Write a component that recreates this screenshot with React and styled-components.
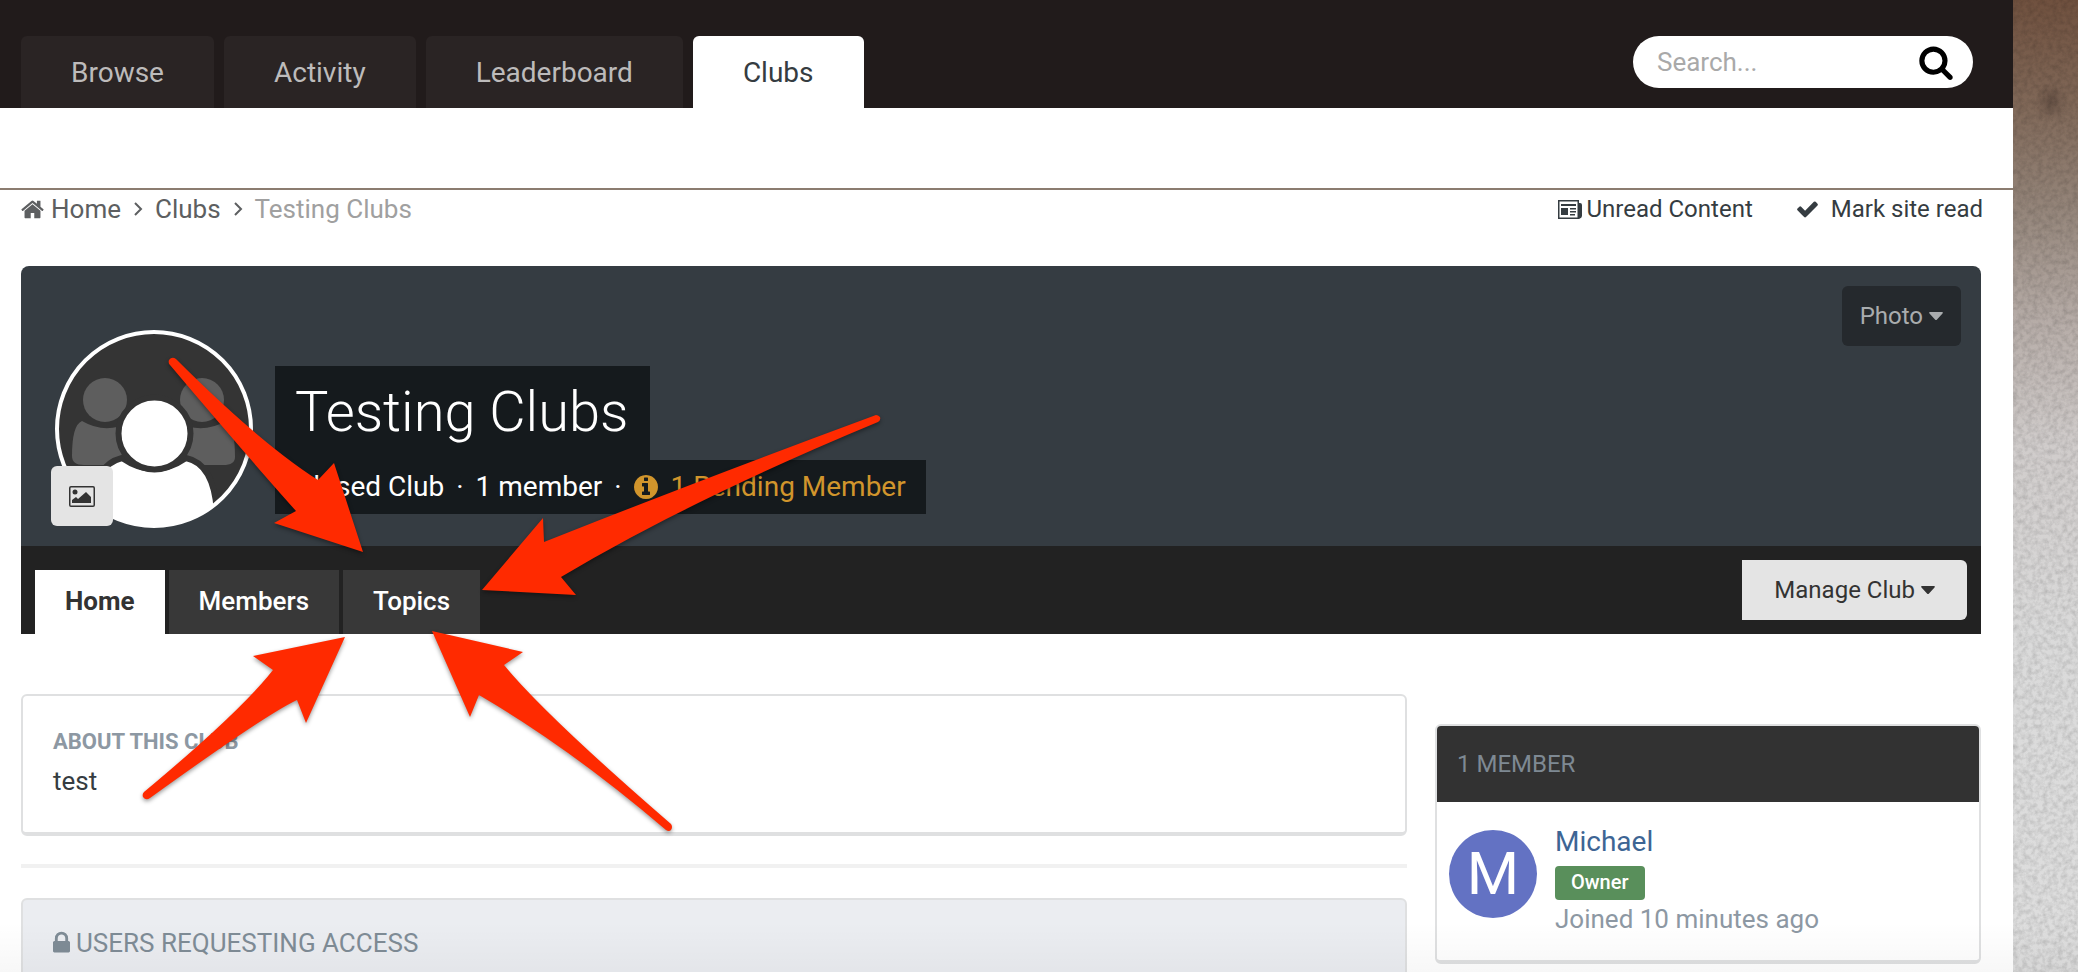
import React from 'react'
import styled, { createGlobalStyle } from 'styled-components'


const GlobalStyle = createGlobalStyle`
    *{
        box-sizing:border-box;
    }
    body{
        margin:0;
        overflow:hidden;
        font-family:Roboto,"Liberation Sans",sans-serif;
        font-size:26px;
        line-height:32px;
        color:#353c41;
    }
    a{
        color:inherit;
        text-decoration:none;
    }
    button,input{
        font-family:inherit;
        font-size:inherit;
        line-height:inherit;
        border:0;
        margin:0;
    }
    h1,h2,h3,p,ol,ul{
        margin:0;
        padding:0;
        font-weight:400;
        font-size:inherit;
        list-style:none;
    }
    svg{
        display:block;
        flex:none;
    }
`;

const Page = styled.div`
    position:relative;
    height:100vh;
    overflow:hidden;
    display:grid;
    grid-template-columns:minmax(0,1fr) 65px;
    background:#fff;
`;

const Wood = styled.svg`
    width:100%;
    height:100%;
`;

const TopBar = styled.header`
    display:flex;
    justify-content:space-between;
    align-items:flex-start;
    height:108px;
    padding:36px 40px 0 21px;
    background:#211b1b;
`;

const MainTabs = styled.nav`
    display:flex;
    gap:10px;
`;

const MainTab = styled.a`
    height:72px;
    padding:0 50px;
    border-radius:6px 6px 0 0;
    font-size:28px;
    line-height:74px;
    background:${(props) => props.$active ? "#fff" : "#2a2424"};
    color:${(props) => props.$active ? "#353c41" : "#bdbbbb"};
`;

const SearchBox = styled.form`
    display:flex;
    align-items:center;
    width:340px;
    height:52px;
    padding:0 19px 0 24px;
    border-radius:26px;
    background:#fff;
    input{
        flex:1;
        min-width:0;
        padding:0;
        outline:none;
        background:none;
    }
    input::placeholder{
        color:#a9a9a9;
        opacity:1;
    }
    button{
        padding:0;
        background:none;
        color:#000;
    }
`;

const Banner = styled.div`
    height:82px;
    border-bottom:2px solid #8b7c70;
`;

const SubBar = styled.div`
    display:flex;
    justify-content:space-between;
    padding:3px 30px 0 21px;
`;

const Crumbs = styled.ol`
    display:flex;
    color:#5d5f61;
    li,a{
        display:flex;
        align-items:center;
    }
    a{
        gap:7px;
    }
    li:last-child{
        color:#a0a0a0;
    }
`;

const Sep = styled.svg`
    margin:0 12px 0 13px;
`;

const QuickLinks = styled.ul`
    display:flex;
    gap:44px;
    font-size:24px;
`;

const QuickLink = styled.a`
    display:flex;
    align-items:center;
    gap:${(props) => props.$gap}px;
`;

const Club = styled.section`
    margin:41px 32px 0 21px;
`;

const Cover = styled.div`
    display:flex;
    align-items:flex-start;
    height:280px;
    padding:20px 20px 0 34px;
    border-radius:8px 8px 0 0;
    background:#353c42;
`;

const AvatarWrap = styled.div`
    position:relative;
    margin-top:44px;
    button{
        position:absolute;
        left:-4px;
        bottom:2px;
        display:grid;
        place-items:center;
        width:62px;
        height:60px;
        padding:0;
        border-radius:6px;
        background:#e4e4e4;
        color:#333;
    }
`;

const ClubInfo = styled.div`
    display:flex;
    flex-direction:column;
    align-items:flex-start;
    margin:80px 0 0 22px;
    color:#fff;
`;

const ClubName = styled.h1`
    height:94px;
    padding:0 22px 0 20px;
    background:#151a1d;
    font-size:56px;
    font-weight:300;
    line-height:92px;
`;

const ClubMeta = styled.ul`
    display:flex;
    height:54px;
    padding:0 20px;
    background:#151a1d;
    font-size:28px;
    line-height:52px;
    li + li::before{
        content:"·";
        margin:0 12px;
        color:#fff;
    }
    li{
        display:flex;
        align-items:center;
    }
    a{
        display:flex;
        align-items:center;
        gap:13px;
        color:#d1952c;
    }
`;

const PhotoButton = styled.button`
    display:flex;
    align-items:center;
    gap:6px;
    height:60px;
    margin-left:auto;
    padding:0 18px;
    border-radius:6px;
    background:#25292d;
    color:#a9acae;
    font-size:24px;
`;

const ClubBar = styled.div`
    display:flex;
    justify-content:space-between;
    align-items:flex-start;
    height:88px;
    padding:14px 14px 0;
    background:#222;
`;

const ClubTabs = styled.nav`
    display:flex;
    gap:4px;
    padding-top:10px;
`;

const ClubTab = styled.a`
    height:64px;
    padding:0 30px;
    font-weight:${(props) => props.$active ? 700 : 500};
    line-height:62px;
    background:${(props) => props.$active ? "#fff" : "#383838"};
    color:${(props) => props.$active ? "#333" : "#fff"};
`;

const ManageButton = styled.button`
    display:flex;
    align-items:center;
    gap:6px;
    height:60px;
    padding:0 32px;
    border-radius:0 6px 6px 0;
    background:#e4e4e4;
    color:#333;
    font-size:24px;
`;

const Columns = styled.div`
    display:grid;
    grid-template-columns:minmax(0,1fr) 546px;
    gap:28px;
    align-items:start;
    padding:60px 32px 0 21px;
`;

const Box = styled.section`
    overflow:hidden;
    border:2px solid #dfe0e1;
    border-bottom-width:4px;
    border-radius:6px;
    background:#fff;
`;

const About = styled(Box)`
    padding:30px 30px 35px;
    h2{
        color:#8d98a3;
        font-size:22px;
        font-weight:700;
    }
    p{
        padding-top:7px;
    }
`;

const Divider = styled.hr`
    height:4px;
    margin:28px 0 30px;
    border:0;
    background:#f1f1f1;
`;

const Requests = styled(Box)`
    height:160px;
    padding:27px 30px;
    background:#ebedf1;
    h2{
        display:flex;
        align-items:center;
        gap:6px;
        color:#7f8c96;
    }
`;

const Members = styled(Box)`
    margin-top:30px;
    h2{
        padding:0 20px;
        background:#323232;
        color:#7e8993;
        font-size:24px;
        line-height:76px;
    }
`;

const Member = styled.div`
    display:flex;
    gap:18px;
    padding:24px 12px 25px;
`;

const Letter = styled.a`
    display:grid;
    place-items:center;
    width:88px;
    height:88px;
    margin-top:4px;
    border-radius:50%;
    background:#6372c3;
    color:#fff;
    font-size:60px;
`;

const MemberInfo = styled.div`
    display:flex;
    flex-direction:column;
    align-items:flex-start;
    h3{
        color:#3d6594;
        font-size:28px;
    }
    p{
        padding-top:3px;
        color:#8d98a3;
    }
`;

const Badge = styled.span`
    height:34px;
    margin-top:8px;
    padding:0 16px;
    border-radius:4px;
    background:#598f5b;
    color:#fff;
    font-size:20px;
    font-weight:500;
    line-height:33px;
`;

const Fade = styled.div`
    position:absolute;
    left:0;
    right:0;
    bottom:0;
    height:50px;
    background:linear-gradient(rgba(0,0,0,0),rgba(0,0,0,0.03));
    pointer-events:none;
`;

const Arrows = styled.svg`
    position:absolute;
    top:0;
    left:0;
    pointer-events:none;
    filter:drop-shadow(0 2px 2px rgba(0,0,0,0.4));
`;


const icons = {
  search: "M1216 832q0-185-131.5-316.5t-316.5-131.5-316.5 131.5-131.5 316.5 131.5 316.5 316.5 131.5 316.5-131.5 131.5-316.5zm512 832q0 52-38 90t-90 38q-54 0-90-38l-343-342q-179 124-399 124-143 0-273.5-55.5t-225-150-150-225-55.5-273.5 55.5-273.5 150-225 225-150 273.5-55.5 273.5 55.5 225 150 150 225 55.5 273.5q0 220-124 399l343 343q37 37 37 90z",
  check: "M1671 566q0 40-28 68l-724 724-136 136q-28 28-68 28t-68-28l-136-136-362-362q-28-28-28-68t28-68l136-136q28-28 68-28t68 28l294 295 656-657q28-28 68-28t68 28l136 136q28 28 28 68z",
  home: "M1472 992v480q0 26-19 45t-45 19h-384v-384h-256v384h-384q-26 0-45-19t-19-45v-480q0-1 .5-3t.5-3l575-474 575 474q1 2 1 6zm223-69l-62 74q-8 9-21 11h-3q-13 0-21-7l-692-577-692 577q-12 8-24 7-13-2-21-11l-62-74q-8-10-7-23.5t11-21.5l719-599q32-26 76-26t76 26l244 204v-195q0-14 9-23t23-9h192q14 0 23 9t9 23v408l219 182q10 8 11 21.5t-7 23.5z",
  lock: "M640 768h512v-192q0-106-75-181t-181-75-181 75-75 181v192zm832 96v576q0 40-28 68t-68 28h-960q-40 0-68-28t-28-68v-576q0-40 28-68t68-28h32v-192q0-184 132-316t316-132 316 132 132 316v192h32q40 0 68 28t28 68z",
  info: "M1152 1376v-160q0-14-9-23t-23-9h-96v-512q0-14-9-23t-23-9h-320q-14 0-23 9t-9 23v160q0 14 9 23t23 9h96v320h-96q-14 0-23 9t-9 23v160q0 14 9 23t23 9h448q14 0 23-9t9-23zm-128-896v-160q0-14-9-23t-23-9h-192q-14 0-23 9t-9 23v160q0 14 9 23t23 9h192q14 0 23-9t9-23zm640 416q0 209-103 385.5t-279.5 279.5-385.5 103-385.5-103-279.5-279.5-103-385.5 103-385.5 279.5-279.5 385.5-103 385.5 103 279.5 279.5 103 385.5z",
}

const Icon = ({ name, size, box = "0 0 1792 1792", width }) => (
  <svg width={width || size} height={size} viewBox={box} fill="currentColor" aria-hidden="true">
    <path d={icons[name]} />
  </svg>
)

const Caret = () => (
  <svg width="14" height="8" viewBox="0 0 14 8" fill="currentColor" aria-hidden="true">
    <path d="M1 0h12q1.500 0.500 0.500 1.500l-5.500 6q-1 1-2 0l-5.500-6q-1-1 0.500-1.500z" />
  </svg>
)

const Chevron = () => (
  <Sep width="9" height="14" viewBox="0 0 9 14" fill="none" stroke="currentColor" strokeWidth="2" aria-hidden="true">
    <path d="M1 1l6 6-6 6" />
  </Sep>
)

const Newspaper = () => (
  <svg width="24" height="19" viewBox="0 0 24 19" fill="currentColor" aria-hidden="true">
    <path fillRule="evenodd" d="M0 0h21v19h-21zM1.500 1.500v16h18v-16z" />
    <path d="M21 3h1q2 0 2 2v11q0 2-3 3zM3 4h15v2h-15zM3 8h7v7h-7zM12 8h6v1.500h-6zM12 11h6v1.500h-6zM12 14h5v1.500h-5z" />
  </svg>
)

const Picture = () => (
  <svg width="26" height="21" viewBox="0 0 26 21" fill="currentColor" aria-hidden="true">
    <path fillRule="evenodd" d="M2 0h22q2 0 2 2v17q0 2-2 2h-22q-2 0-2-2v-17q0-2 2-2zM2 1.500q-0.500 0-0.500 0.500v17q0 0.500 0.500 0.500h22q0.500 0 0.500-0.500v-17q0-0.500-0.500-0.500z" />
    <circle cx="6" cy="6" r="2.500" />
    <path d="M3 17v-3l4-3 2 2 8-7 5 5v6z" />
  </svg>
)

const ClubAvatar = () => (
  <svg width="198" height="198" viewBox="0 0 198 198" role="img" aria-label="Club avatar">
    <defs>
      <clipPath id="round"><circle cx="99" cy="99" r="96" /></clipPath>
    </defs>
    <circle cx="99" cy="99" r="97" fill="#343434" />
    <g clipPath="url(#round)">
      <g fill="#5e5e5e">
        <circle cx="50" cy="70" r="22" />
        <circle cx="147" cy="70" r="22" />
        <path d="M27 91q24 14 48 1h46q26 13 50-1q9 6 9 36q0 8-12 8h-139q-12 0-12-9q0-31 10-35z" />
      </g>
      <g fill="#fff" stroke="#343434" strokeWidth="6">
        <path d="M36 205q-5-68 31-77q32 22 64 0q34 7 31 77z" />
        <circle cx="99.500" cy="103.500" r="36" />
      </g>
    </g>
    <circle cx="99" cy="99" r="97" fill="none" stroke="#fff" strokeWidth="4" />
  </svg>
)

const mainTabs = ["Browse", "Activity", "Leaderboard", "Clubs"]
const clubTabs = ["Home", "Members", "Topics"]

const arrows = [
  "M170 365Q240 448 296 511L274 523L363 552L334 463L318 480Q260 443 176 359Q172 356 169 360Q168 363 170 365Z",
  "M876 415Q700 480 544 542L543 518L482 590L576 595L561 577Q690 500 878 422Q881 420 880 417Q878 415 876 415Z",
  "M144 792Q240 712 273 670L253 656L345 637L306 723L297 700Q265 715 150 798Q146 801 143 797Q142 794 144 792Z",
  "M671 824Q545 715 504 665L523 652L432 631L470 717L479 695Q570 748 666 830Q669 832 671 830Q673 827 671 824Z",
]

const App = () => {
  return (
    <Page>
      <GlobalStyle />
      <main>
        <TopBar>
          <MainTabs>
            {mainTabs.map((val) => (
              <MainTab href="#" key={val} $active={val === "Clubs"}>{val}</MainTab>
            ))}
          </MainTabs>
          <SearchBox role="search">
            <input type="text" placeholder="Search..." aria-label="Search" />
            <button type="button" aria-label="Search">
              <Icon name="search" size={36} />
            </button>
          </SearchBox>
        </TopBar>
        <Banner />

        <SubBar>
          <Crumbs>
            <li><a href="#"><Icon name="home" size={25} width={23} box="64 0 1664 1792" />Home</a><Chevron /></li>
            <li><a href="#">Clubs</a><Chevron /></li>
            <li>Testing Clubs</li>
          </Crumbs>
          <QuickLinks>
            <li><QuickLink href="#" $gap={5}><Newspaper />Unread Content</QuickLink></li>
            <li><QuickLink href="#" $gap={13}><Icon name="check" size={24} width={21} box="121 0 1550 1792" />Mark site read</QuickLink></li>
          </QuickLinks>
        </SubBar>

        <Club>
          <Cover>
            <AvatarWrap>
              <ClubAvatar />
              <button type="button" aria-label="Change picture"><Picture /></button>
            </AvatarWrap>
            <ClubInfo>
              <ClubName>Testing Clubs</ClubName>
              <ClubMeta>
                <li>Closed Club</li>
                <li>1 member</li>
                <li><a href="#"><Icon name="info" size={24} box="128 128 1536 1536" />1 Pending Member</a></li>
              </ClubMeta>
            </ClubInfo>
            <PhotoButton type="button">Photo<Caret /></PhotoButton>
          </Cover>
          <ClubBar>
            <ClubTabs>
              {clubTabs.map((val) => (
                <ClubTab href="#" key={val} $active={val === "Home"}>{val}</ClubTab>
              ))}
            </ClubTabs>
            <ManageButton type="button">Manage Club<Caret /></ManageButton>
          </ClubBar>
        </Club>

        <Columns>
          <div>
            <About>
              <h2>ABOUT THIS CLUB</h2>
              <p>test</p>
            </About>
            <Divider />
            <Requests>
              <h2><Icon name="lock" size={24} width={17} box="320 128 1152 1536" />USERS REQUESTING ACCESS</h2>
            </Requests>
          </div>
          <Members>
            <h2>1 MEMBER</h2>
            <Member>
              <Letter href="#">M</Letter>
              <MemberInfo>
                <h3><a href="#">Michael</a></h3>
                <Badge>Owner</Badge>
                <p>Joined 10 minutes ago</p>
              </MemberInfo>
            </Member>
          </Members>
        </Columns>
      </main>

      <Wood preserveAspectRatio="none" aria-hidden="true">
        <defs>
          <linearGradient id="wood" x1="0" y1="0" x2="0" y2="1">
            <stop offset="0" stopColor="#70513f" />
            <stop offset="0.100" stopColor="#806858" />
            <stop offset="0.200" stopColor="#95867b" />
            <stop offset="0.300" stopColor="#b5aba6" />
            <stop offset="0.420" stopColor="#d0cccb" />
            <stop offset="0.600" stopColor="#dadada" />
            <stop offset="1" stopColor="#dfdfdf" />
          </linearGradient>
          <filter id="grain" x="0" y="0" width="100%" height="100%">
            <feTurbulence type="fractalNoise" baseFrequency="0.200" numOctaves="3" />
            <feColorMatrix type="matrix" values="0 0 0 0 0  0 0 0 0 0  0 0 0 0 0  1 0 0 0 -0.350" />
          </filter>
          <radialGradient id="knot">
            <stop offset="0" stopColor="#4c3b33" stopOpacity="0.500" />
            <stop offset="1" stopColor="#4c3b33" stopOpacity="0" />
          </radialGradient>
        </defs>
        <rect width="100%" height="100%" fill="url(#wood)" />
        <ellipse cx="38" cy="102" rx="16" ry="20" fill="url(#knot)" />
        <rect width="100%" height="100%" filter="url(#grain)" opacity="0.250" />
      </Wood>

      <Fade />
      <Arrows width="900" height="860" viewBox="0 0 900 860" fill="#ff2a00" aria-hidden="true">
        {arrows.map((d) => <path key={d} d={d} />)}
      </Arrows>
    </Page>
  )
}

export default App
